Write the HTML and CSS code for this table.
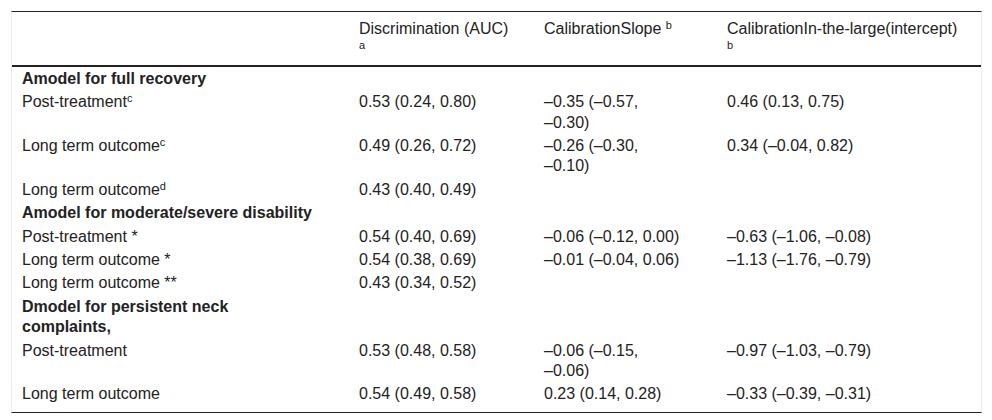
FILE: index.html
```html
<!DOCTYPE html>
<html lang="en">
<head>
<meta charset="utf-8">
<title>Model performance</title>
<link rel="stylesheet" href="styles.css">
</head>
<body>
<div class="wrap">
<table class="perf">
  <colgroup>
    <col class="c1"><col class="c2"><col class="c3"><col class="c4">
  </colgroup>
  <thead>
    <tr>
      <th></th>
      <th>Discrimination (AUC)<br><sup>a</sup></th>
      <th>CalibrationSlope <sup>b</sup></th>
      <th>CalibrationIn-the-large(intercept)<br><sup>b</sup></th>
    </tr>
  </thead>
  <tbody>
    <tr class="group"><td>Amodel for full recovery</td><td></td><td></td><td></td></tr>
    <tr><td>Post-treatment<sup>c</sup></td><td>0.53 (0.24, 0.80)</td><td>–0.35 (–0.57,<br>–0.30)</td><td>0.46 (0.13, 0.75)</td></tr>
    <tr><td>Long term outcome<sup>c</sup></td><td>0.49 (0.26, 0.72)</td><td>–0.26 (–0.30,<br>–0.10)</td><td>0.34 (–0.04, 0.82)</td></tr>
    <tr><td>Long term outcome<sup>d</sup></td><td>0.43 (0.40, 0.49)</td><td></td><td></td></tr>
    <tr class="group"><td>Amodel for moderate/severe disability</td><td></td><td></td><td></td></tr>
    <tr><td>Post-treatment *</td><td>0.54 (0.40, 0.69)</td><td>–0.06 (–0.12, 0.00)</td><td>–0.63 (–1.06, –0.08)</td></tr>
    <tr><td>Long term outcome *</td><td>0.54 (0.38, 0.69)</td><td>–0.01 (–0.04, 0.06)</td><td>–1.13 (–1.76, –0.79)</td></tr>
    <tr><td>Long term outcome **</td><td>0.43 (0.34, 0.52)</td><td></td><td></td></tr>
    <tr class="group"><td>Dmodel for persistent neck<br>complaints,</td><td></td><td></td><td></td></tr>
    <tr><td>Post-treatment</td><td>0.53 (0.48, 0.58)</td><td>–0.06 (–0.15,<br>–0.06)</td><td>–0.97 (–1.03, –0.79)</td></tr>
    <tr class="last"><td>Long term outcome</td><td>0.54 (0.49, 0.58)</td><td>0.23 (0.14, 0.28)</td><td>–0.33 (–0.39, –0.31)</td></tr>
  </tbody>
</table>
</div>
</body>
</html>
```

FILE: styles.css
```css
html, body {
  margin: 0;
  padding: 0;
  background: #fff;
}
.wrap {
  padding: 11px 0 0 11px;
}
.perf {
  width: 971px;
  table-layout: fixed;
  border-collapse: separate;
  border-spacing: 0;
  border-top: 1px solid #222;
  border-bottom: 1px solid #222;
  border-left: 1px solid #ececec;
  border-right: 1px solid #ececec;
  font-family: "Liberation Sans", Arial, Helvetica, sans-serif;
  font-size: 16px;
  color: #222;
}
.c1 { width: 337px; }
.c2 { width: 185px; }
.c3 { width: 183px; }
.c4 { width: 264px; }
.perf th {
  font-weight: normal;
  text-align: left;
  vertical-align: top;
  padding: 7px 10px 6px 10px;
  line-height: 20px;
  border-bottom: 2px solid #222;
}
.perf td {
  text-align: left;
  vertical-align: top;
  padding: 1.8px 10px 1.2px 10px;
  line-height: 20.4px;
}
.perf .group td:first-child {
  font-weight: bold;
}
.perf .last td {
  padding-bottom: 7px;
}
.perf sup {
  font-size: 11px;
  line-height: 0;
  vertical-align: 5px;
}
```
